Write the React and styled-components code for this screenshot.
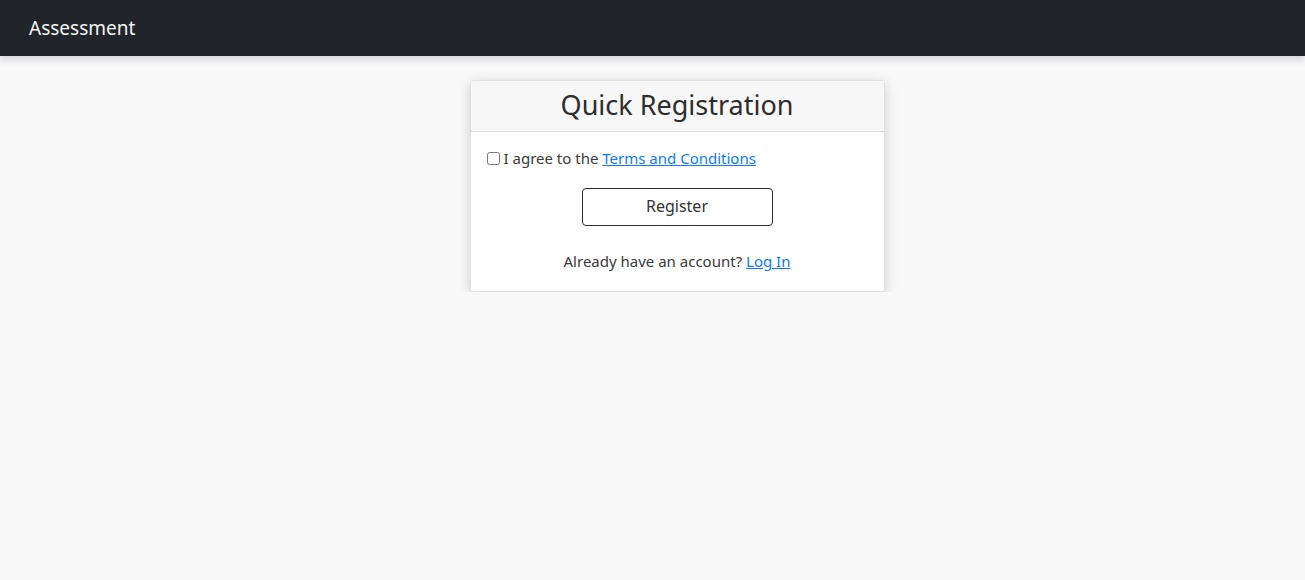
import React from 'react'
import styled, { createGlobalStyle } from 'styled-components'

const GlobalStyle = createGlobalStyle`
  html, body {
    margin: 0;
    padding: 0;
    background: #f9f9f9;
    font-family: "Noto Sans", "Open Sans", sans-serif;
    color: #333;
  }
`

const Navbar = styled.nav`
  height: 56px;
  background: #212529;
  display: flex;
  align-items: center;
  padding: 0 29px;
  box-shadow: 0 4px 8px rgba(0, 0, 0, 0.15);
  position: relative;
`

const Brand = styled.a`
  color: #f4f4f4;
  font-size: 19px;
  text-decoration: none;
`

const Main = styled.main`
  display: flex;
  justify-content: center;
  padding: 24px 0 0 49px;
`

const Card = styled.div`
  width: 413px;
  background: #fff;
  border: 1px solid #e0e0e0;
  border-radius: 3px;
  box-shadow: 0 3px 14px rgba(0, 0, 0, 0.18);
  overflow: hidden;
`

const CardHeader = styled.div`
  background: #f7f7f7;
  border-bottom: 1px solid #dcdcdc;
  height: 51px;
  display: flex;
  align-items: center;
  justify-content: center;
  padding-bottom: 3px;
  box-sizing: border-box;
`

const Title = styled.h2`
  margin: 0;
  font-size: 27px;
  font-weight: 400;
  color: #2d2d2d;
`

const CardBody = styled.div`
  padding: 16px 16px 20px;
  display: flex;
  flex-direction: column;
`

const Agree = styled.label`
  display: flex;
  align-items: center;
  font-size: 15px;
  color: #3a3a3a;
  line-height: 20px;
`

const Box = styled.input`
  width: 13px;
  height: 13px;
  margin: 0 4px 0 0;
`

const Link = styled.a`
  color: #0d7bff;
  text-decoration: underline;
`

const Button = styled.button`
  align-self: center;
  width: 191px;
  height: 38px;
  margin-top: 20px;
  background: #fff;
  border: 1px solid #2d2d2d;
  border-radius: 4px;
  font-family: inherit;
  font-size: 16px;
  color: #333;
  padding: 0 0 2px;
`

const Footer = styled.p`
  margin: 25px 0 0;
  text-align: center;
  font-size: 15px;
  line-height: 20px;
  color: #3a3a3a;
`

export default function App() {
  return (
    <>
      <GlobalStyle />
      <Navbar>
        <Brand href="#">Assessment</Brand>
      </Navbar>
      <Main>
        <Card>
          <CardHeader>
            <Title>Quick Registration</Title>
          </CardHeader>
          <CardBody>
            <Agree>
              <Box type="checkbox" />
              I agree to the&nbsp;<Link href="#">Terms and Conditions</Link>
            </Agree>
            <Button>Register</Button>
            <Footer>
              Already have an account? <Link href="#">Log In</Link>
            </Footer>
          </CardBody>
        </Card>
      </Main>
    </>
  )
}
